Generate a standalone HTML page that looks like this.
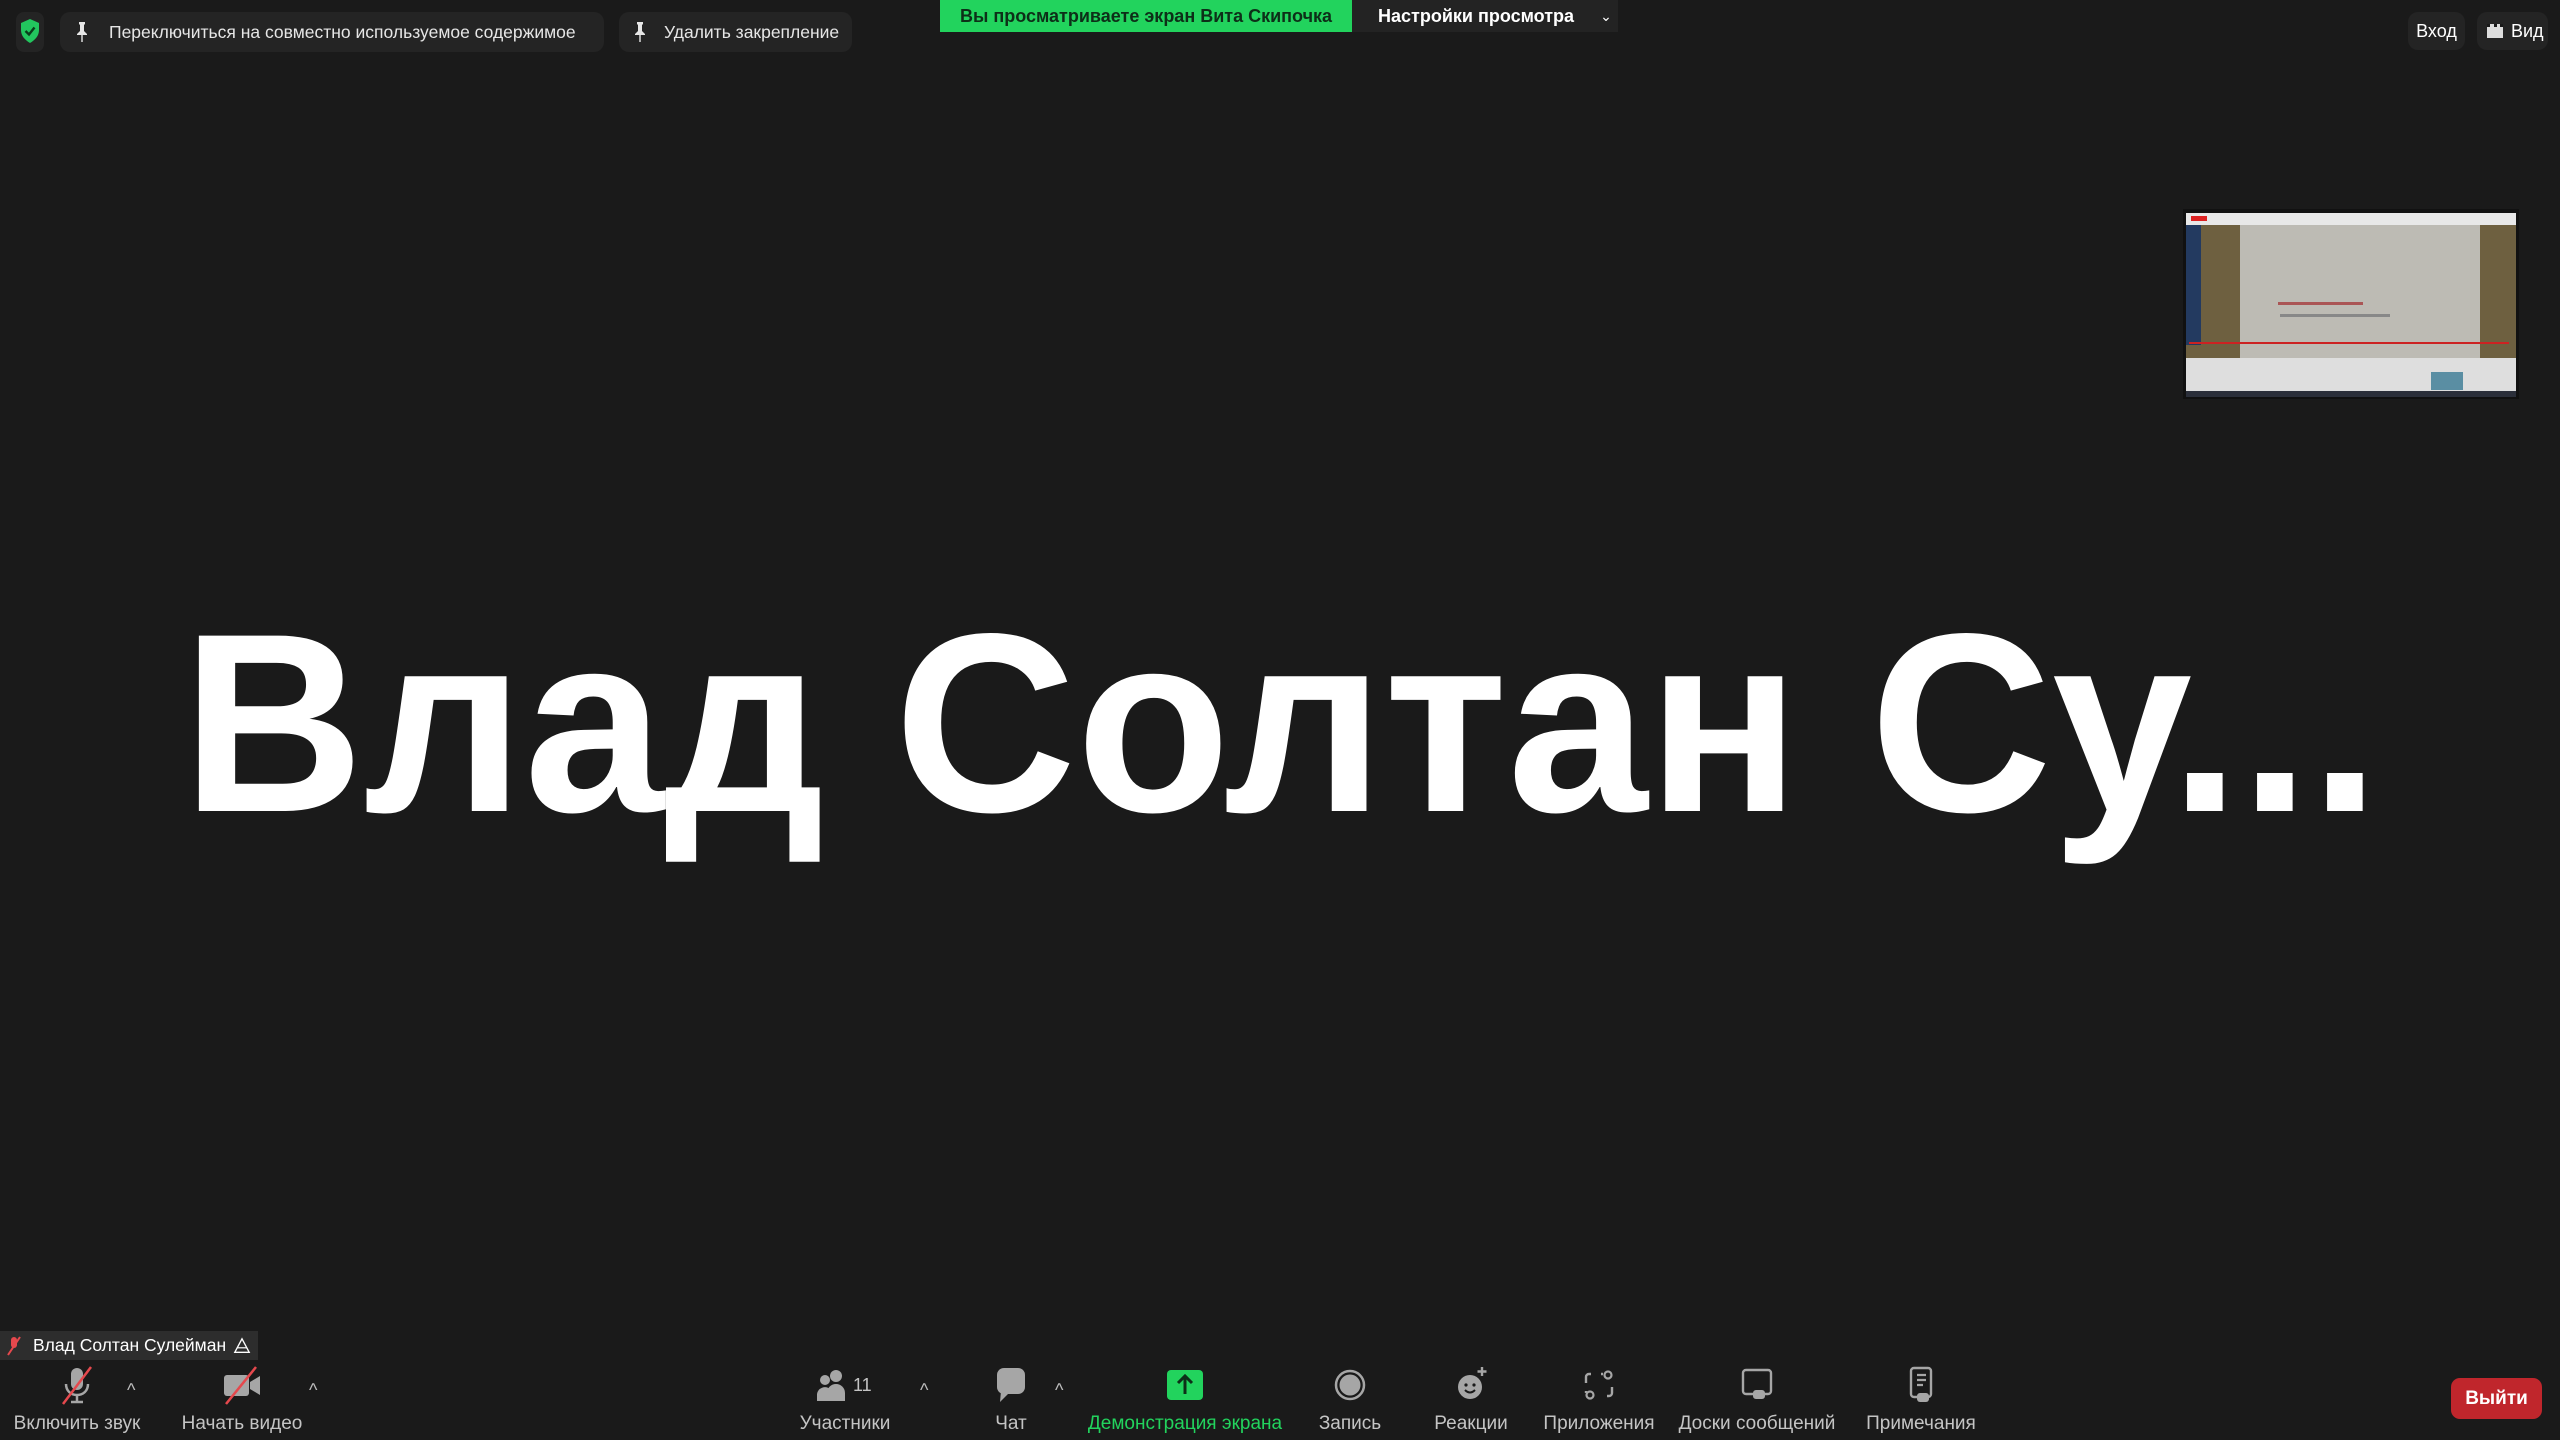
<!DOCTYPE html>
<html><head><meta charset="utf-8">
<style>
*{margin:0;padding:0;box-sizing:border-box}
html,body{width:2560px;height:1440px;background:#1a1a1a;overflow:hidden;font-family:"Liberation Sans","DejaVu Sans",sans-serif;color:#fff}
.abs{position:absolute}
.pill{position:absolute;background:#242424;border-radius:10px;color:#e6e6e6;font-size:17.5px;display:flex;align-items:center;white-space:nowrap}
.tb{position:absolute;top:1365px;width:200px;margin-left:-100px;text-align:center;color:#c4c4c4;font-size:19px}
.tb svg{display:block;margin:0 auto}
.tb .lbl{position:absolute;top:48px;left:0;right:0;text-align:center;white-space:nowrap}
.caret{position:absolute;top:1380px;color:#bdbdbd;font-size:18px}
</style></head><body>

<div class="abs" style="left:16px;top:12px;width:28px;height:40px;background:#242424;border-radius:8px"></div>
<svg class="abs" style="left:19px;top:18px" width="22" height="26" viewBox="0 0 22 26"><path d="M11 1 L20 5 V12 C20 18 16 22 11 25 C6 22 2 18 2 12 V5 Z" fill="#22c55e"/><path d="M6.5 13 L10 16.5 L15.5 9.5" stroke="#0a3d1c" stroke-width="2.4" fill="none"/></svg>

<div class="pill" style="left:60px;top:12px;width:544px;height:40px;padding-left:49px">Переключиться на совместно используемое содержимое</div>
<svg class="abs" style="left:76px;top:21px" width="12" height="22" viewBox="0 0 12 22"><path d="M3 1h6v2l-1 1v6l3 3v1H1v-1l3-3V4L3 3z" fill="#e6e6e6"/><rect x="5.3" y="14" width="1.4" height="7" fill="#e6e6e6"/></svg>
<div class="pill" style="left:619px;top:12px;width:233px;height:40px;padding-left:45px">Удалить закрепление</div>
<svg class="abs" style="left:634px;top:21px" width="12" height="22" viewBox="0 0 12 22"><path d="M3 1h6v2l-1 1v6l3 3v1H1v-1l3-3V4L3 3z" fill="#e6e6e6"/><rect x="5.3" y="14" width="1.4" height="7" fill="#e6e6e6"/></svg>

<div class="abs" style="left:940px;top:0;width:412px;height:32px;background:#22d35d;color:#0d2f18;font-size:18px;font-weight:bold;display:flex;align-items:center;justify-content:center;white-space:nowrap">Вы просматриваете экран Вита Скипочка</div>
<div class="abs" style="left:1352px;top:0;width:266px;height:32px;background:#232323;color:#fff;font-size:18px;font-weight:bold;display:flex;align-items:center;padding-left:26px;white-space:nowrap">Настройки просмотра<span style="margin-left:26px;font-size:14px;font-weight:normal">&#8964;</span></div>

<div class="pill" style="left:2408px;top:12px;width:57px;height:38px;justify-content:center;color:#fff;font-size:18px">Вход</div>
<div class="pill" style="left:2477px;top:12px;width:71px;height:38px;padding-left:10px;color:#fff;font-size:18px"><span style="display:inline-block;width:16px;height:14px;background:#ddd;margin-right:8px;border-top:3px dotted #1a1a1a"></span>Вид</div>

<div class="abs" style="left:2183px;top:209px;width:336px;height:190px;background:#111">
  <div class="abs" style="left:3px;top:4px;width:330px;height:12px;background:#e8e8e8"></div>
  <div class="abs" style="left:8px;top:7px;width:16px;height:5px;background:#d22"></div>
  <div class="abs" style="left:3px;top:16px;width:330px;height:133px;background:#6e6040"></div>
  <div class="abs" style="left:3px;top:16px;width:15px;height:120px;background:#233a60"></div>
  <div class="abs" style="left:57px;top:16px;width:240px;height:133px;background:#bdbbb4"></div>
  <div class="abs" style="left:95px;top:93px;width:85px;height:3px;background:#a55"></div>
  <div class="abs" style="left:97px;top:105px;width:110px;height:3px;background:#888"></div>
  <div class="abs" style="left:6px;top:133px;width:320px;height:2px;background:#c22"></div>
  <div class="abs" style="left:3px;top:149px;width:330px;height:33px;background:#dedede"></div>
  <div class="abs" style="left:248px;top:163px;width:32px;height:18px;background:#5a8ea3"></div>
  <div class="abs" style="left:3px;top:182px;width:330px;height:6px;background:#2b2f3a"></div>
</div>

<svg class="abs" style="left:0;top:0" width="2560" height="1000">
<text x="182" y="811" textLength="2198" lengthAdjust="spacingAndGlyphs" font-family="Liberation Sans, sans-serif" font-weight="bold" font-size="255" fill="#fff">Влад Солтан Су...</text>
</svg>

<div class="abs" style="left:0;top:1331px;width:258px;height:29px;background:#2d2d2d;font-size:17.5px;display:flex;align-items:center;padding-left:33px;white-space:nowrap">Влад Солтан Сулейман</div>
<svg class="abs" style="left:233px;top:1337px" width="18" height="18" viewBox="0 0 20 20"><path d="M10 2 L18 17 H2 Z" stroke="#fff" stroke-width="1.5" fill="none"/><path d="M5 12h10" stroke="#fff" stroke-width="1.3"/></svg>
<svg class="abs" style="left:6px;top:1336px" width="16" height="20" viewBox="0 0 16 20"><rect x="5" y="1" width="6" height="11" rx="3" fill="#e5484d"/><path d="M2 19 L14 1" stroke="#e5484d" stroke-width="2"/></svg>

<div class="tb" style="left:77px"><svg width="40" height="40" viewBox="0 0 40 40"><rect x="14" y="3" width="12" height="22" rx="6" fill="#a6a6a6"/><path d="M9 19c0 7 5 11 11 11s11-4 11-11" stroke="#a6a6a6" stroke-width="2.5" fill="none"/><path d="M20 30v6M14 37h12" stroke="#a6a6a6" stroke-width="2.5"/><path d="M6 39L34 2" stroke="#e5484d" stroke-width="2.5"/></svg><div class="lbl">Включить звук</div></div>
<div class="caret" style="left:127px">^</div>
<div class="tb" style="left:242px"><svg width="40" height="40" viewBox="0 0 40 40"><rect x="2" y="10" width="25" height="21" rx="3" fill="#a6a6a6"/><path d="M28 17l10-6v19l-10-6z" fill="#a6a6a6"/><path d="M4 39L34 2" stroke="#e5484d" stroke-width="2.5"/></svg><div class="lbl">Начать видео</div></div>
<div class="caret" style="left:309px">^</div>

<div class="tb" style="left:845px"><svg width="80" height="40" viewBox="0 0 80 40"><circle cx="31" cy="11" r="6" fill="#a6a6a6"/><path d="M22 36v-8a9 9 0 0 1 18 0v8z" fill="#a6a6a6"/><circle cx="20" cy="15" r="5" fill="#a6a6a6"/><path d="M12 36v-7a8 8 0 0 1 13-5v12z" fill="#a6a6a6"/><text x="48" y="26" font-size="18" fill="#c4c4c4" font-family="Liberation Sans">11</text></svg><div class="lbl">Участники</div></div>
<div class="caret" style="left:920px">^</div>
<div class="tb" style="left:1011px"><svg width="40" height="40" viewBox="0 0 40 40"><rect x="6" y="3" width="28" height="26" rx="7" fill="#a6a6a6"/><path d="M10 26l-1 11 9-9z" fill="#a6a6a6"/></svg><div class="lbl">Чат</div></div>
<div class="caret" style="left:1055px">^</div>
<div class="tb" style="left:1185px;color:#22d35d"><svg width="40" height="40" viewBox="0 0 40 40"><rect x="2" y="5" width="36" height="30" rx="4" fill="#22d35d"/><path d="M20 29V12M13 18l7-7 7 7" stroke="#0d2f18" stroke-width="3" fill="none"/></svg><div class="lbl">Демонстрация экрана</div></div>
<div class="tb" style="left:1350px"><svg width="40" height="40" viewBox="0 0 40 40"><circle cx="20" cy="20" r="14" stroke="#a6a6a6" stroke-width="2.5" fill="none"/><circle cx="20" cy="20" r="10.5" fill="#a6a6a6"/></svg><div class="lbl">Запись</div></div>
<div class="tb" style="left:1471px"><svg width="40" height="40" viewBox="0 0 40 40"><circle cx="19" cy="22" r="12" fill="#a6a6a6"/><circle cx="15" cy="20" r="1.6" fill="#1a1a1a"/><circle cx="23" cy="20" r="1.6" fill="#1a1a1a"/><path d="M14 25q5 5 10 0" stroke="#1a1a1a" stroke-width="2" fill="none"/><path d="M31 2v9M26.5 6.5h9" stroke="#a6a6a6" stroke-width="2.4"/></svg><div class="lbl">Реакции</div></div>
<div class="tb" style="left:1599px"><svg width="40" height="40" viewBox="0 0 40 40"><path d="M12 9h-2a3 3 0 0 0-3 3v6M28 31h2a3 3 0 0 0 3-3v-6M7 26v2M22 9h2" stroke="#a6a6a6" stroke-width="2.4" fill="none"/><circle cx="29" cy="10" r="3.5" stroke="#a6a6a6" stroke-width="2.2" fill="none"/><circle cx="11" cy="30" r="3.5" stroke="#a6a6a6" stroke-width="2.2" fill="none"/></svg><div class="lbl">Приложения</div></div>
<div class="tb" style="left:1757px"><svg width="40" height="40" viewBox="0 0 40 40"><rect x="6" y="5" width="28" height="24" rx="3" stroke="#a6a6a6" stroke-width="2.4" fill="none"/><rect x="16" y="25" width="12" height="9" rx="3" fill="#a6a6a6"/></svg><div class="lbl">Доски сообщений</div></div>
<div class="tb" style="left:1921px"><svg width="40" height="40" viewBox="0 0 40 40"><rect x="10" y="3" width="20" height="29" rx="3" stroke="#a6a6a6" stroke-width="2.4" fill="none"/><path d="M16 10h9M16 15h9M16 20h6" stroke="#a6a6a6" stroke-width="2.2"/><rect x="16" y="28" width="12" height="9" rx="3" fill="#a6a6a6"/></svg><div class="lbl">Примечания</div></div>

<div class="abs" style="left:2451px;top:1378px;width:91px;height:41px;background:#c0262c;border-radius:9px;color:#fff;font-weight:bold;font-size:19px;display:flex;align-items:center;justify-content:center">Выйти</div>
</body></html>
